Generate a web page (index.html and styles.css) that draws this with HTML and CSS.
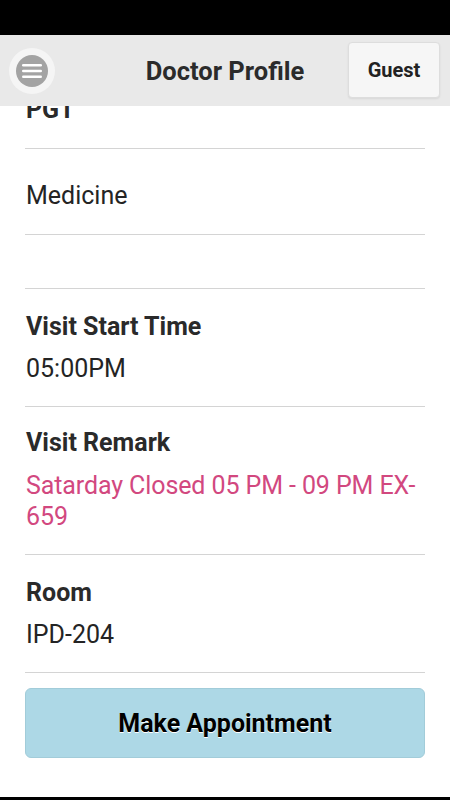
FILE: index.html
```html
<!DOCTYPE html>
<html lang="en">
<head>
    <meta charset="UTF-8">
    <meta name="viewport" content="width=device-width, initial-scale=1.0">
    <title>Doctor Profile</title>
    <link rel="stylesheet" href="styles.css">
</head>
<body>

<div class="status-bar"></div>

<div class="header">
    <button class="menu-btn" aria-label="Menu">
        <span class="menu-icon">
            <svg width="20" height="16" viewBox="0 0 20 16">
                <rect x="0" y="1" width="20" height="2.6" rx="1.3" fill="#ffffff"/>
                <rect x="0" y="6.7" width="20" height="2.6" rx="1.3" fill="#ffffff"/>
                <rect x="0" y="12.4" width="20" height="2.6" rx="1.3" fill="#ffffff"/>
            </svg>
        </span>
    </button>
    <h1>Doctor Profile</h1>
    <button class="guest-btn">Guest</button>
</div>

<div class="content">
    <ul class="details">
        <li class="row first">
            <div class="value strong">PGT</div>
        </li>
        <li class="row single">
            <div class="value">Medicine</div>
        </li>
        <li class="row empty"></li>
        <li class="row">
            <div class="label">Visit Start Time</div>
            <div class="value">05:00PM</div>
        </li>
        <li class="row remark-row">
            <div class="label">Visit Remark</div>
            <div class="value remark">Satarday Closed 05 PM - 09 PM EX-659</div>
        </li>
        <li class="row">
            <div class="label">Room</div>
            <div class="value">IPD-204</div>
        </li>
    </ul>

    <button class="appointment-btn">Make Appointment</button>
</div>

<div class="nav-bar"></div>

</body>
</html>
```

FILE: styles.css
```css
/* Global Styles */
body {
    margin: 0;
    width: 450px;
    height: 800px;
    background-color: #ffffff;
    color: #222222;
    font-family: Roboto, 'Noto Sans', sans-serif;
    display: flex;
    flex-direction: column;
    overflow: hidden;
}

.status-bar {
    height: 35px;
    background-color: #000000;
    flex-shrink: 0;
}

/* Header */
.header {
    height: 71px;
    background-color: #e9e9e9;
    display: flex;
    align-items: center;
    justify-content: space-between;
    padding: 0 10px 0 9px;
    flex-shrink: 0;
    position: relative;
    z-index: 2;
}

.header h1 {
    margin: 0;
    font-size: 25.5px;
    font-weight: bold;
    color: #2b2b2b;
    position: absolute;
    left: 0;
    right: 0;
    text-align: center;
    pointer-events: none;
}

.menu-btn {
    width: 46px;
    height: 46px;
    border-radius: 50%;
    border: none;
    padding: 0;
    background-color: rgba(255, 255, 255, 0.55);
    display: flex;
    align-items: center;
    justify-content: center;
    cursor: pointer;
}

.menu-icon {
    width: 32px;
    height: 32px;
    border-radius: 50%;
    background-color: #a3a3a3;
    display: flex;
    align-items: center;
    justify-content: center;
}

.guest-btn {
    width: 92px;
    height: 56px;
    margin-top: -2px;
    background-color: #f6f6f6;
    border: 1px solid #dddddd;
    border-radius: 4px;
    box-shadow: 0 1px 2px rgba(0, 0, 0, 0.08);
    font-family: Roboto, sans-serif;
    font-size: 20px;
    font-weight: bold;
    color: #222222;
    cursor: pointer;
}

/* Details list */
.content {
    flex: 1;
    overflow: hidden;
    padding: 0 25px;
}

.details {
    list-style: none;
    margin: -12px 0 0;
    padding: 0;
}

.row {
    padding: 22px 0 22px 1px;
    border-bottom: 1px solid #d4d4d4;
    display: flex;
    flex-direction: column;
    gap: 11px;
    font-size: 25px;
    line-height: 31px;
}

.row.first {
    padding-top: 0;
    padding-bottom: 23px;
}

.row.single {
    padding-top: 31px;
    padding-bottom: 23px;
}

.row.empty {
    height: 53px;
    padding: 0;
}

.row.remark-row {
    padding-top: 20px;
    padding-bottom: 22px;
    gap: 12px;
}

.label,
.value.strong {
    font-weight: bold;
    color: #2a2a2a;
}

.value {
    color: #242424;
}

.value.remark {
    color: #d2487f;
    letter-spacing: -0.1px;
}

/* Button */
.appointment-btn {
    display: block;
    width: 100%;
    height: 70px;
    margin-top: 15px;
    background-color: #add8e6;
    border: 1px solid #a2ccd9;
    border-radius: 6px;
    font-family: Roboto, sans-serif;
    font-size: 25px;
    font-weight: bold;
    color: #000000;
    text-shadow: 0 1px 0 #ffffff;
    cursor: pointer;
}

.nav-bar {
    height: 3px;
    background-color: #000000;
    flex-shrink: 0;
}
```
